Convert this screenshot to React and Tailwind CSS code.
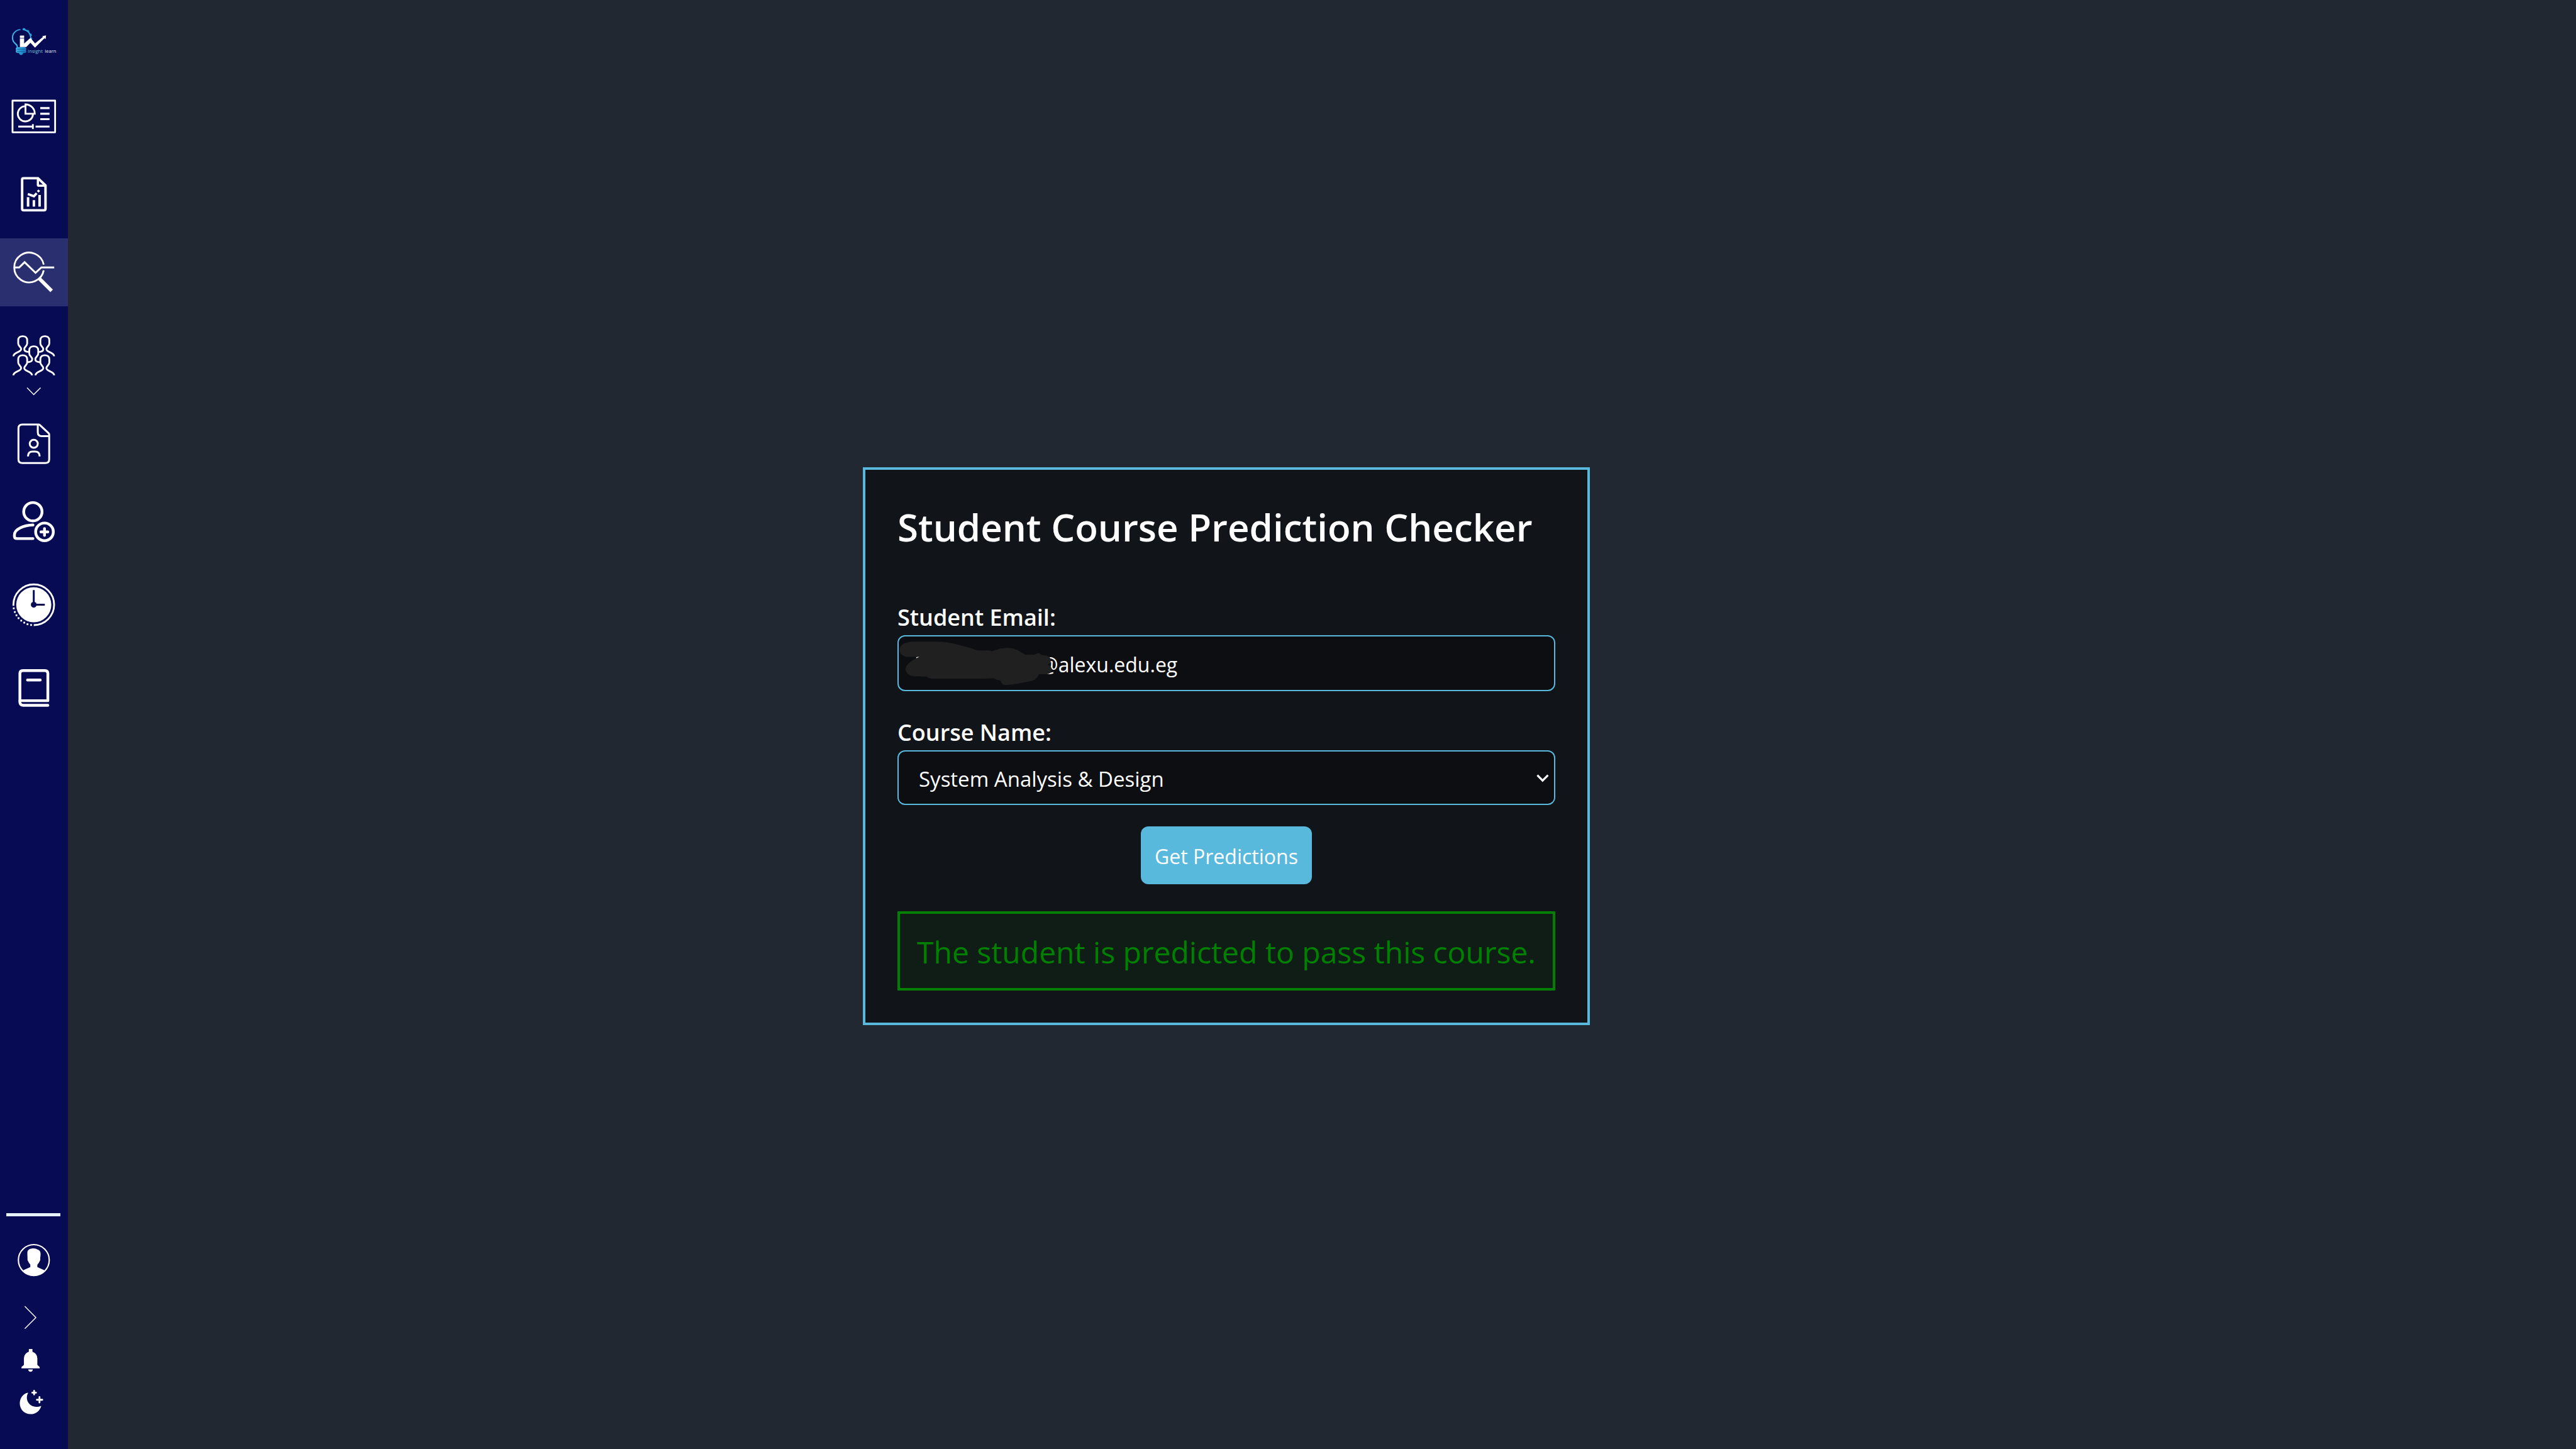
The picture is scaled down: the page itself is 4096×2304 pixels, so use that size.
import { useState } from "react";

/* Every sidebar drawing shares one scale: 5.625 drawing units per pixel, 108px wide. */
function Glyph({ y, h, className, children }) {
  return (
    <svg viewBox={`0 ${y} 607.5 ${h}`} className={className} fill="none" stroke="white" aria-hidden="true">
      {children}
    </svg>
  );
}

function Logo() {
  return (
    <Glyph y={-120} h={736.875} className="block w-full">
      <defs>
        <linearGradient id="bulb" x1="0" y1="1" x2="1" y2="0">
          <stop offset="0" stopColor="#45c8f2" />
          <stop offset="1" stopColor="#2b9bd8" />
        </linearGradient>
        <linearGradient id="base" x1="0" y1="0" x2="1" y2="0.3">
          <stop offset="0" stopColor="#3fbdec" />
          <stop offset="1" stopColor="#1c78bd" />
        </linearGradient>
      </defs>
      <path d="M183 145C141 147 112 179 112 217C112 245 126 262 140 273Q156 286 155 303" stroke="url(#bulb)" strokeWidth="11" />
      <path d="M204 143C249 149 273 180 276 226" stroke="url(#bulb)" strokeWidth="10" />
      <g fill="#2b9fdb" stroke="none">
        <path d="M205 132L226 133L223 152L202 150Z" />
        <path d="M247 146L264 158L256 169L240 158Z" />
        <path d="M270 182L279 180L286 199L272 203Z" />
        <path d="M274 219H287V234H280Z" />
      </g>
      <g fill="white" stroke="none">
        <rect x="178" y="198" width="38" height="22" />
        <path d="M178 225H216V270L272 219L314 268L384 210L378 203L412 196L408 230L398 222L313 306L272 262L235 301H178Z" />
      </g>
      <path
        d="M156 302H222Q236 304 235 318Q230 330 235 340Q236 353 220 354H208Q204 372 189 372Q174 372 170 354H158Q141 353 141 339Q146 330 141 318Q141 303 156 302Z"
        fill="url(#base)"
        stroke="none"
      />
      <path d="M153 320H222M153 340H222" stroke="#0b3f86" strokeWidth="4" />
      <g stroke="none" fontSize="43" fontFamily='"Open Sans", sans-serif'>
        <text x="248" y="351" fill="#6fc3dc">Insight</text>
        <text x="401" y="351" fill="#e4ecf7">learn</text>
      </g>
    </Glyph>
  );
}

function DashboardIcon() {
  return (
    <Glyph y={616.875} h={607.5} className="block w-full">
      <rect x="112" y="780" width="381" height="283" strokeWidth="16" strokeLinejoin="round" />
      <path d="M222 830A68 68 0 1 0 295 903" strokeWidth="16" />
      <path d="M228 814A83 83 0 0 1 311 897H228Z" strokeWidth="16" />
      <path d="M360 847H443M360 897H443M360 946H443M163 1012H290M318 1012H443" strokeWidth="18" />
      <path d="M294 990V1034" strokeWidth="16" />
    </Glyph>
  );
}

function ReportIcon() {
  return (
    <Glyph y={-5.625} h={607.5} className="block w-full">
      <path d="M210 154H340L407 218V428Q407 441 394 441H211Q198 441 198 428V166Q198 154 210 154Z" strokeWidth="22" />
      <path d="M339 154V212Q339 221 348 221H407" strokeWidth="20" />
      <path d="M251 324V408M303 350V408M354 304V408" strokeWidth="22" />
      <path d="M249 295L303 315L328 288" strokeWidth="21" />
      <path d="M344 254L359 268L344 283L330 268Z" fill="white" stroke="none" />
    </Glyph>
  );
}

function PredictionIcon() {
  return (
    <Glyph y={691.875} h={607.5} className="block w-full">
      <path d="M391 927A133 133 0 1 0 391 978" strokeWidth="16" />
      <path d="M132 952H172L220 905L318 1000L370 952H485" strokeWidth="17" />
      <path d="M352 1052L462 1162" strokeWidth="32" />
    </Glyph>
  );
}

function TeamIcon() {
  const head = "C-14 96 -40 88 -40 66V36C-40 12 -23 0 0 0C23 0 40 12 40 36V66C40 88 14 96 14 115";
  const full = "M-83 180C-83 140 -14 148 -14 115" + head + "C14 148 83 140 83 180";
  const left = "M-83 180C-83 140 -14 148 -14 115" + head + "C14 132 24 140 55 141";
  const right = "M-55 141C-24 140 -14 132 -14 115" + head + "C14 148 83 140 83 180";
  const middle = "M-54 143C-24 138 -14 132 -14 115" + head + "C14 132 24 138 54 143";
  return (
    <Glyph y={-50.625} h={748.125} className="block w-full">
      <g strokeWidth="16">
        <path d={left} transform="translate(203 127)" />
        <path d={right} transform="translate(401 127)" />
        <path d={middle} transform="translate(302 217)" />
        <path d={full} transform="translate(203 297)" />
        <path d={full} transform="translate(401 297)" />
      </g>
      <path d="M242 588L302 649L363 588" strokeWidth="8" />
    </Glyph>
  );
}

function ProfileFileIcon() {
  return (
    <Glyph y={787.5} h={607.5} className="block w-full">
      <g strokeWidth="17">
        <path d="M200 917H346Q352 917 357 922L435 995Q440 1000 440 1008V1228Q440 1262 405 1262H200Q165 1262 165 1228V951Q165 917 200 917Z" />
        <path d="M338 917V986Q338 1021 373 1021H440" />
        <circle cx="302" cy="1089" r="36" />
        <path d="M251 1202V1197Q253 1159 292 1159H313Q352 1159 354 1197V1202" />
      </g>
    </Glyph>
  );
}

function AddUserIcon() {
  return (
    <Glyph y={45} h={607.5} className="block w-full">
      <g strokeWidth="25" strokeLinecap="round">
        <circle cx="294" cy="257" r="82" />
        <path d="M295 376C215 378 129 410 129 465V478Q131 497 150 497H295" />
        <circle cx="398" cy="437" r="79" />
        <path d="M366 437H428M398 407V468" />
      </g>
    </Glyph>
  );
}

function ClockIcon() {
  const dots = [[123, 1121], [133, 1154], [147, 1183], [166, 1209], [190, 1231], [217, 1249], [246, 1263], [278, 1270]];
  return (
    <Glyph y={787.5} h={607.5} className="block w-full">
      <path d="M120 1098V1089A182 182 0 1 1 302 1271" strokeWidth="16" />
      {dots.map(([x, y]) => (
        <rect key={x} x={x - 8} y={y - 8} width="16" height="16" fill="white" stroke="none" />
      ))}
      <circle cx="302" cy="1089" r="157" fill="white" stroke="none" />
      <path d="M302 958V1089H401" stroke="#060b54" strokeWidth="17" />
      <circle cx="302" cy="1089" r="26" fill="#060b54" stroke="none" />
    </Glyph>
  );
}

function BookIcon() {
  return (
    <Glyph y={30} h={607.5} className="block w-full">
      <g strokeWidth="25" strokeLinecap="round" strokeLinejoin="round">
        <path d="M178 447V205Q178 178 205 178H401Q428 178 428 205V447Z" />
        <path d="M178 447V462Q181 488 208 488H428M246 262H360" />
      </g>
    </Glyph>
  );
}

function AvatarIcon() {
  return (
    <Glyph y={165} h={663.75} className="block w-full">
      <circle cx="302.5" cy="500" r="138" strokeWidth="12" />
      <path
        d="M245 431C246 406 270 395 300 395Q322 395 335 406Q362 414 363 443Q363 463 360 477V500Q348 529 334 542V563L400 593Q362 640 302 640Q242 640 205 593L271 563V540Q257 526 246 500V477Q244 455 245 431Z"
        fill="white"
        stroke="none"
      />
    </Glyph>
  );
}

function ExpandIcon() {
  return (
    <Glyph y={828.75} h={371.25} className="block w-full">
      <path d="M224 916L321 1014L224 1112" strokeWidth="8" strokeLinecap="round" />
    </Glyph>
  );
}

function BellIcon() {
  return (
    <Glyph y={1200} h={382.5} className="block w-full">
      <g fill="white" stroke="none">
        <path d="M258 1296H290V1320Q332 1335 334 1379V1438L355 1457V1468H192V1457L214 1438V1379Q216 1335 258 1320Z" />
        <path d="M252 1478H294Q290 1499 273 1499Q256 1499 252 1478Z" />
      </g>
    </Glyph>
  );
}

function MoonIcon() {
  return (
    <Glyph y={1582.5} h={371.25} className="block w-full">
      <path
        d="M252 1687C220 1745 258 1813 325 1813Q348 1813 369 1804C358 1847 321 1878 273 1878C220 1878 177 1837 177 1782C177 1733 210 1692 252 1687Z"
        fill="white"
        stroke="none"
      />
      <path d="M305 1669V1702M289 1686H322M353 1726V1774M330 1750H378" strokeWidth="16" strokeLinecap="round" />
    </Glyph>
  );
}

const mainLinks = [
  { label: "Dashboard", Icon: DashboardIcon, style: "" },
  { label: "Reports", Icon: ReportIcon, style: "mt-4" },
  { label: "Prediction", Icon: PredictionIcon, style: "mt-4 bg-[#2a2f70]" },
  { label: "Groups", Icon: TeamIcon, style: "mt-4" },
  { label: "Student file", Icon: ProfileFileIcon, style: "mt-4" },
  { label: "Add user", Icon: AddUserIcon, style: "mt-4" },
  { label: "Schedule", Icon: ClockIcon, style: "mt-6" },
  { label: "Courses", Icon: BookIcon, style: "mt-6" },
];

const footerActions = [
  { label: "Profile", Icon: AvatarIcon },
  { label: "Expand", Icon: ExpandIcon },
  { label: "Notifications", Icon: BellIcon },
  { label: "Dark mode", Icon: MoonIcon },
];

function Sidebar() {
  return (
    <aside className="flex w-[108px] shrink-0 flex-col justify-between bg-[#060b54]">
      <nav className="flex flex-col">
        <a href="#home" aria-label="Insight learn">
          <Logo />
        </a>
        {mainLinks.map(({ label, Icon, style }) => (
          <a key={label} href="#section" aria-label={label} className={style}>
            <Icon />
          </a>
        ))}
      </nav>
      <div className="flex flex-col pb-[42px]">
        <hr className="mr-3 mb-[10px] ml-[10px] h-[5px] border-0 bg-[#e7f2ff]" />
        {footerActions.map(({ label, Icon }) => (
          <button key={label} type="button" aria-label={label}>
            <Icon />
          </button>
        ))}
      </div>
    </aside>
  );
}

function Redaction() {
  return (
    <svg viewBox="46 41 1462.5 500.6" className="pointer-events-none absolute top-0 left-0 w-[260px]" aria-hidden="true">
      <path d="M214 250V240Q226 231 243 235L232 246Z" fill="white" />
      <path
        d="M185 98H400C500 100 580 122 660 145L765 177H865Q880 179 889 186C940 165 980 155 1045 155C1110 156 1150 198 1194 216H1275Q1305 185 1338 218C1385 218 1416 235 1420 265Q1416 300 1385 304Q1424 312 1426 345Q1424 385 1385 390H1310C1302 420 1275 445 1240 452L1100 478Q1050 486 1010 487C985 485 972 465 970 447Q935 443 905 426L780 430H350Q320 426 302 411L190 408C150 406 122 380 118 345C124 295 180 262 242 234L140 235C95 234 64 205 62 170C66 125 120 98 185 98Z"
        fill="#202020"
      />
    </svg>
  );
}

export default function App() {
  const [email, setEmail] = useState("@alexu.edu.eg");
  return (
    <div className='flex min-h-screen bg-[#222831] font-["Open_Sans","Noto_Sans",sans-serif] text-white'>
      <Sidebar />
      <main className="flex flex-1 items-center justify-center pt-[69px] pr-[304px]">
        <section className="flex w-full max-w-[1156px] flex-col border-4 border-[#59b9dc] bg-[#111419] px-[51px] pt-[51px] pb-[51px]">
          <h1 className="text-[60px] leading-[80px] font-semibold whitespace-nowrap">Student Course Prediction Checker</h1>
          <form className="mt-20 flex flex-col" onSubmit={(e) => e.preventDefault()}>
            <label htmlFor="email" className="mb-1 text-[36px] leading-[48px] font-semibold">
              Student Email:
            </label>
            <div className="relative">
              <input
                id="email"
                type="text"
                value={email}
                onChange={(e) => setEmail(e.target.value)}
                className="block h-[89px] w-full rounded-xl border-2 border-[#59b9dc] bg-[#0d0e12] pt-1 pr-8 pl-[225px] text-[32px] outline-none"
              />
              <Redaction />
            </div>
            <label htmlFor="course" className="mt-[42px] mb-1 text-[36px] leading-[48px] font-semibold">
              Course Name:
            </label>
            <div className="relative">
              <select
                id="course"
                className="block h-[87px] w-full appearance-none rounded-xl border-2 border-[#59b9dc] bg-[#0d0e12] pt-1 pr-16 pl-8 text-[33px] outline-none"
              >
                <option>System Analysis &amp; Design</option>
              </select>
              <svg
                viewBox="240 262 112 72"
                className="pointer-events-none absolute top-[38px] right-[10px] w-5"
                fill="none"
                stroke="white"
                strokeWidth="18"
                aria-hidden="true"
              >
                <path d="M248 271L295 319L343 271" />
              </svg>
            </div>
            <button
              type="submit"
              className="mt-[34px] h-[92px] self-center rounded-xl bg-[#59b9dc] px-[22px] pt-1 text-[32px] leading-[44px]"
            >
              Get Predictions
            </button>
          </form>
          <p className="mt-[43px] border-4 border-[#008000] bg-[#0f1d16] pt-[29px] pb-[25px] text-center text-[48px] leading-[64px] whitespace-nowrap text-[#008000]">
            The student is predicted to pass this course.
          </p>
        </section>
      </main>
    </div>
  );
}
